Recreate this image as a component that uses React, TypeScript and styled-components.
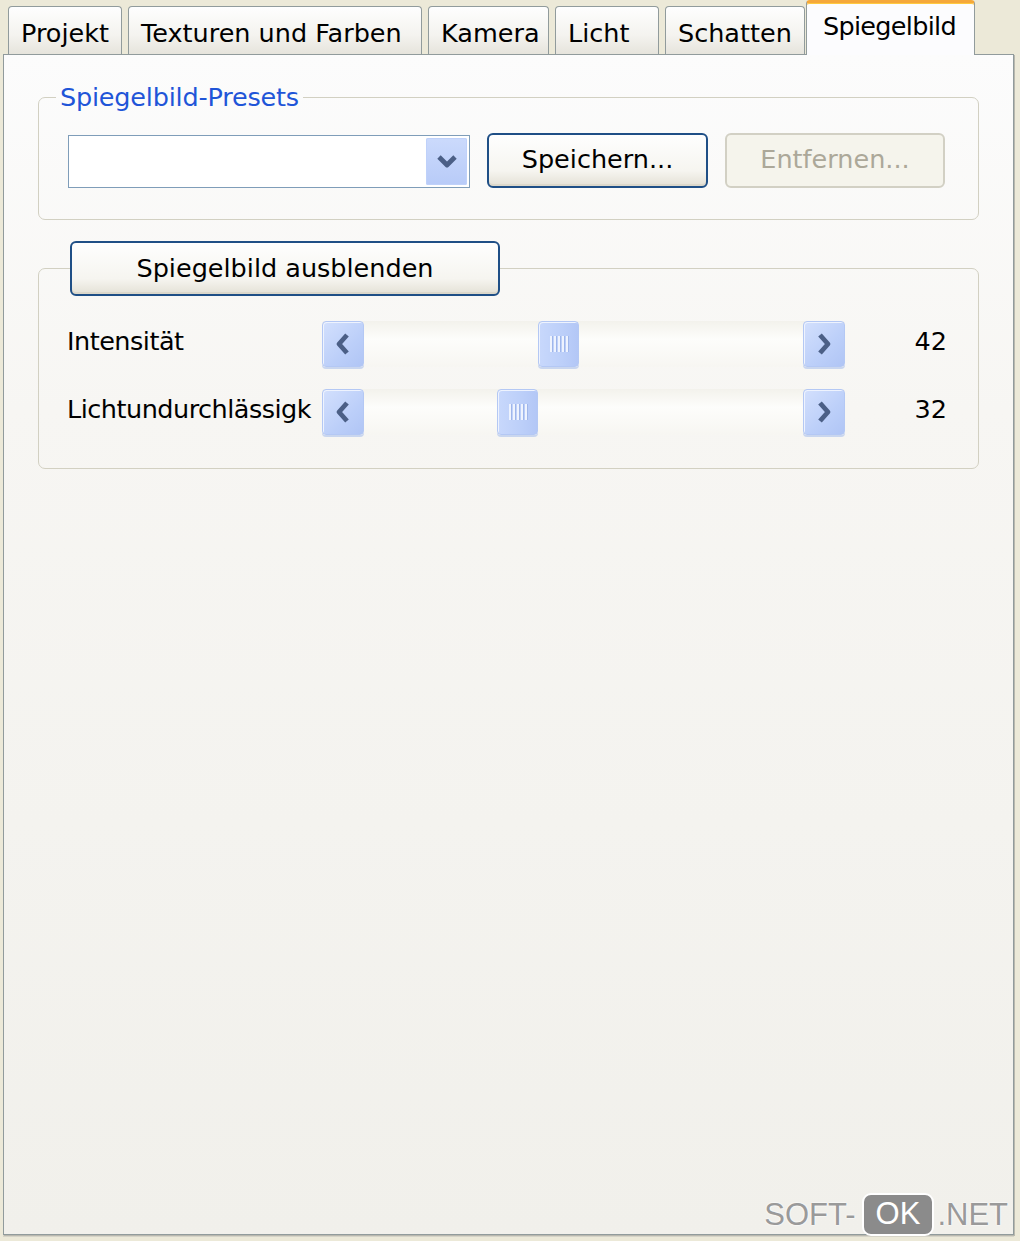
import React from 'react';
import styled, { createGlobalStyle } from 'styled-components';

const GlobalStyle = createGlobalStyle`
  html, body {
    margin: 0;
    padding: 0;
    background: #ece9d8;
  }
  * {
    box-sizing: border-box;
  }
`;

const FONT = `"DejaVu Sans", Verdana, sans-serif`;

interface TabItem {
    label: string;
    width: number;
    active?: boolean;
}

const tabs: TabItem[] = [
    { label: 'Projekt', width: 114 },
    { label: 'Texturen und Farben', width: 294 },
    { label: 'Kamera', width: 121 },
    { label: 'Licht', width: 104 },
    { label: 'Schatten', width: 140 },
    { label: 'Spiegelbild', width: 169, active: true },
];

interface SliderRowData {
    label: string;
    value: number;
}

const sliders: SliderRowData[] = [
    { label: 'Intensität', value: 42 },
    { label: 'Lichtundurchlässigk', value: 32 },
];

const ChevronLeft = () => (
    <svg width="16" height="24" viewBox="0 0 16 24">
        <path d="M12 3 L4 12 L12 21" fill="none" stroke="#4b5f86" strokeWidth="4.8" strokeLinejoin="round" />
    </svg>
);

const ChevronRight = () => (
    <svg width="16" height="24" viewBox="0 0 16 24">
        <path d="M4 3 L12 12 L4 21" fill="none" stroke="#4b5f86" strokeWidth="4.8" strokeLinejoin="round" />
    </svg>
);

const ChevronDown = () => (
    <svg width="22" height="15" viewBox="0 0 22 15">
        <path d="M3 3 L11 11 L19 3" fill="none" stroke="#4b5f86" strokeWidth="4.8" strokeLinejoin="round" />
    </svg>
);

const Slider: React.FC<{ value: number }> = ({ value }) => (
    <ScrollBar>
        <ArrowButton>
            <ChevronLeft />
        </ArrowButton>
        <Track>
            <Thumb style={{ left: Math.round(value * 4.15) }}>
                <Grip>
                    <i />
                    <i />
                    <i />
                    <i />
                    <i />
                </Grip>
            </Thumb>
        </Track>
        <ArrowButton>
            <ChevronRight />
        </ArrowButton>
    </ScrollBar>
);

const App: React.FC = () => {
    return (
        <Window>
            <GlobalStyle />
            <TabStrip>
                {tabs.map((t) =>
                    t.active ? (
                        <ActiveTab key={t.label} $width={t.width}>
                            {t.label}
                        </ActiveTab>
                    ) : (
                        <Tab key={t.label} $width={t.width}>
                            {t.label}
                        </Tab>
                    )
                )}
            </TabStrip>
            <Panel>
                <Group $top={27}>
                    <GroupTitle>Spiegelbild-Presets</GroupTitle>
                    <PresetBody>
                        <Combo>
                            <ComboButton>
                                <ChevronDown />
                            </ComboButton>
                        </Combo>
                        <Button $width={221}>Speichern...</Button>
                        <Button $width={220} disabled>
                            Entfernen...
                        </Button>
                    </PresetBody>
                </Group>
                <Group $top={21}>
                    <LegendButtonWrap>
                        <Button $width={430}>Spiegelbild ausblenden</Button>
                    </LegendButtonWrap>
                    <SliderBody>
                        {sliders.map((s) => (
                            <SliderRow key={s.label}>
                                <RowLabel>{s.label}</RowLabel>
                                <Slider value={s.value} />
                                <RowValue>{s.value}</RowValue>
                            </SliderRow>
                        ))}
                    </SliderBody>
                </Group>
            </Panel>
            <Watermark>
                SOFT-<OkBox>OK</OkBox>.NET
            </Watermark>
        </Window>
    );
};

const Window = styled.div`
  position: relative;
  width: 1020px;
  height: 1241px;
  background: #ece9d8;
  font-family: ${FONT};
  font-size: 25.5px;
  color: #000;
  overflow: hidden;
`;

const TabStrip = styled.div`
  display: flex;
  align-items: flex-end;
  gap: 6px;
  height: 54px;
  padding-left: 8px;
`;

const Tab = styled.div<{ $width: number }>`
  width: ${(p) => p.$width}px;
  height: 48px;
  padding: 4px 0 0 12px;
  display: flex;
  align-items: center;
  border: 1px solid #919b9c;
  border-bottom: none;
  border-radius: 4px 4px 0 0;
  background: linear-gradient(#fefefe, #f4f3ef 60%, #e6e4dc);
  white-space: nowrap;
`;

const ActiveTab = styled.div<{ $width: number }>`
  position: relative;
  z-index: 2;
  width: ${(p) => p.$width}px;
  height: 55px;
  margin-bottom: -1px;
  margin-left: -5px;
  padding: 0 0 6px 16px;
  display: flex;
  align-items: center;
  border: 1px solid #919b9c;
  border-top: 3px solid #f5a83a;
  border-bottom: none;
  border-radius: 4px 4px 0 0;
  background: #fcfcfe;
  box-shadow: inset 0 1px 0 #ffc93f;
  letter-spacing: -0.7px;
  white-space: nowrap;
`;

const Panel = styled.div`
  position: relative;
  margin-left: 3px;
  width: 1011px;
  height: 1181px;
  padding: 0 34px;
  border: 1px solid #919b9c;
  background: linear-gradient(#fcfcfc, #f7f6f3 30%, #f1f0eb);
  box-shadow: 1px 1px 0 #b9b8ae, 0 2px 0 #d6d4c8;
`;

const Group = styled.fieldset<{ $top: number }>`
  margin: ${(p) => p.$top}px 0 0;
  padding: 0;
  min-width: 0;
  border: 1px solid #d2d0c2;
  border-radius: 7px;
`;

const GroupTitle = styled.legend`
  margin-left: 17px;
  padding: 0 4px;
  height: 30px;
  line-height: 30px;
  color: #1f55d8;
  letter-spacing: -0.2px;
`;

const LegendButtonWrap = styled.legend`
  margin-left: 31px;
  padding: 0;
  height: 55px;
`;

const PresetBody = styled.div`
  display: flex;
  align-items: center;
  gap: 17px;
  height: 56px;
  margin: 20px 0 31px 29px;
`;

const Combo = styled.div`
  width: 402px;
  height: 53px;
  margin-top: 3px;
  padding: 2px;
  display: flex;
  justify-content: flex-end;
  border: 1px solid #7f9db9;
  background: #fff;
`;

const ComboButton = styled.div`
  width: 41px;
  height: 100%;
  display: flex;
  align-items: center;
  justify-content: center;
  border-radius: 2px;
  background: linear-gradient(#cbdafc, #b8cbf8);
  box-shadow: inset 0 0 0 1px #bfd1fa;
`;

const Button = styled.button<{ $width: number }>`
  width: ${(p) => p.$width}px;
  height: 55px;
  padding: 0 0 2px;
  font-family: ${FONT};
  font-size: 25.5px;
  color: #000;
  border: 2px solid #1f4f86;
  border-radius: 6px;
  background: linear-gradient(#fefefe, #f6f5f0 70%, #e4e1d6);
  box-shadow: inset 0 -2px 0 #dcd8cb;
  white-space: nowrap;

  &:disabled {
    color: #aca899;
    border: 2px solid #d2d0c4;
    background: #f5f4ec;
    box-shadow: none;
  }
`;

const SliderBody = styled.div`
  display: flex;
  flex-direction: column;
  gap: 22px;
  padding: 25px 30px 33px 28px;
`;

const SliderRow = styled.div`
  display: grid;
  grid-template-columns: 255px 523px 102px;
  align-items: center;
  height: 46px;
`;

const RowLabel = styled.div`
  white-space: nowrap;
  overflow: hidden;
  letter-spacing: -0.5px;
  padding-bottom: 6px;
`;

const RowValue = styled.div`
  text-align: right;
  padding-bottom: 6px;
`;

const ScrollBar = styled.div`
  display: flex;
  height: 46px;
  background: linear-gradient(#f3f2ec, #fdfdfb 40%, #f7f6f2);
  border-radius: 3px;
`;

const ArrowButton = styled.div`
  width: 42px;
  height: 46px;
  flex: none;
  display: flex;
  align-items: center;
  justify-content: center;
  border: 1px solid #b4c8f4;
  border-radius: 4px;
  background: linear-gradient(135deg, #d3e0fd, #bccff9 60%, #b0c5f5);
  box-shadow: inset 1px 1px 0 #eef3fe, 0 2px 0 #c9d6ef;
`;

const Track = styled.div`
  position: relative;
  flex: 1;
  height: 100%;
`;

const Thumb = styled.div`
  position: absolute;
  top: 0;
  width: 41px;
  height: 46px;
  display: flex;
  align-items: center;
  justify-content: center;
  border: 1px solid #b4c8f4;
  border-radius: 4px;
  background: linear-gradient(90deg, #c8d8fc, #bccff9 60%, #b3c7f6);
  box-shadow: inset 1px 1px 0 #eef3fe, 0 2px 0 #c9d6ef;
`;

const Grip = styled.div`
  display: flex;
  gap: 2px;
  height: 16px;

  i {
    display: block;
    width: 2px;
    height: 100%;
    background: #eef3fe;
    box-shadow: 1px 0 0 #9fb6ea;
  }
`;

const Watermark = styled.div`
  position: absolute;
  right: 12px;
  bottom: 5px;
  display: flex;
  align-items: center;
  font-family: "Liberation Sans", Arial, sans-serif;
  font-size: 31px;
  color: #9a9a9a;
  text-shadow: 0 0 2px #fff, 0 0 2px #fff;
`;

const OkBox = styled.span`
  display: inline-block;
  margin: 0 3px 0 6px;
  padding: 1px 12px 2px;
  border: 2px solid #fff;
  border-radius: 9px;
  background: #8b8b8b;
  color: #fff;
  text-shadow: none;
`;

export default App;
